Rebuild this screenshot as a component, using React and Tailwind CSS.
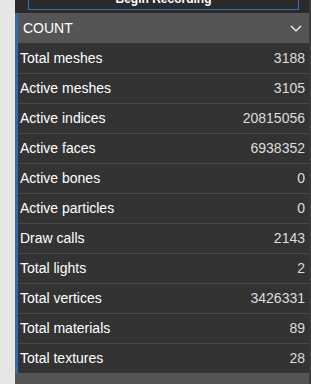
import React from "react";

const rows = [
  ["Total meshes", "3188"],
  ["Active meshes", "3105"],
  ["Active indices", "20815056"],
  ["Active faces", "6938352"],
  ["Active bones", "0"],
  ["Active particles", "0"],
  ["Draw calls", "2143"],
  ["Total lights", "2"],
  ["Total vertices", "3426331"],
  ["Total materials", "89"],
  ["Total textures", "28"],
];

const App = () => {
  return (
    <div className="flex w-[311px] h-[384px] overflow-hidden bg-[#e6e6e6] font-['Liberation_Sans',Arial,sans-serif] text-[14px]">
      <div className="w-[15px] shrink-0" />
      <div className="flex-1 flex flex-col bg-[#2b2b2b] overflow-hidden">

        {/* Recording button, scrolled up */}
        <div className="h-[13px] shrink-0 flex flex-col justify-end pl-[13px] pr-[10px] pb-[3px]">
          <button className="h-[24px] shrink-0 -mt-[20px] border border-[#2f76bd] text-white text-[12px] font-bold flex justify-center items-center pt-[1px]">
            Begin Recording
          </button>
        </div>

        {/* COUNT section */}
        <div className="flex flex-col border-l-[3px] border-[#2f6ea8]">
          <div className="h-[30px] flex items-center justify-between bg-[#555555] pl-[5px] pr-[7px] text-white">
            <span>COUNT</span>
            <svg width="12" height="7" viewBox="0 0 12 7" fill="none">
              <path d="M1 1 L6 6 L11 1" stroke="#ffffff" strokeWidth="1.2" />
            </svg>
          </div>
          {rows.map(([label, value], i) => (
            <div
              key={label}
              className={
                "flex items-center justify-between bg-[#333333] pl-[2px] pr-[4px] h-[30px] " +
                (i === 0 ? "" : "border-t border-[#474747]")
              }
            >
              <span className="text-white">{label}</span>
              <span className="text-[#dddddd]">{value}</span>
            </div>
          ))}
        </div>

        {/* Next section header */}
        <div className="flex-1 bg-[#555555]" />
      </div>
      <div className="w-[2px] shrink-0 bg-[#3a3a3a]" />
    </div>
  );
};

export default App;
